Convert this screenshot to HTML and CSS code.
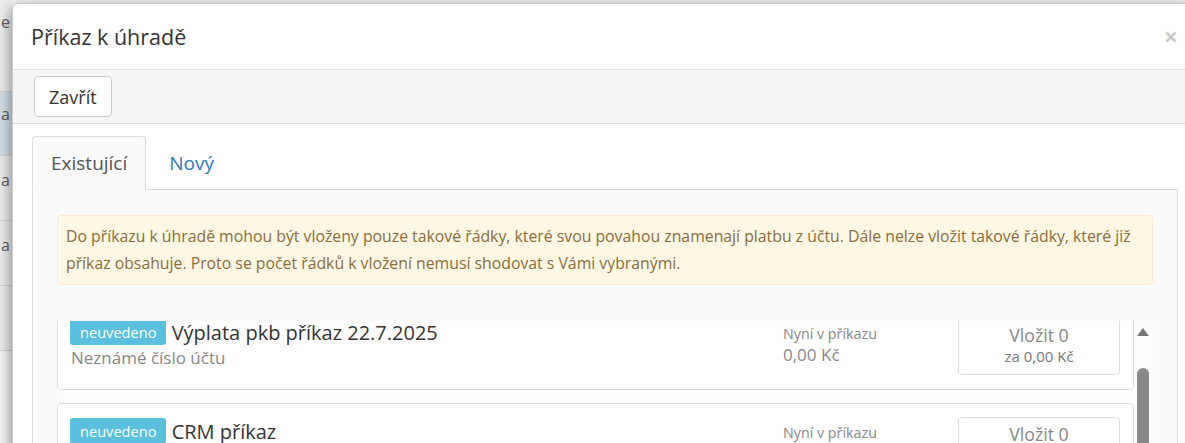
FILE: index.html
```html
<!DOCTYPE html>
<html lang="cs">
<head>
    <meta charset="UTF-8" />
    <meta name="viewport" content="width=device-width, initial-scale=1.0" />
    <title>Příkaz k úhradě</title>
    <link rel="stylesheet" href="styles.css">
</head>
<body>
    <!-- stranka pod dialogem, vidi se jen okraj -->
    <div class="page-strip">
        <div class="page-row first"><span>e</span></div>
        <div class="page-row selected"><span>a</span></div>
        <div class="page-row"><span>a</span></div>
        <div class="page-row"><span>a</span></div>
        <div class="page-row"></div>
    </div>

    <div class="modal">
        <div class="modal-header">
            <span class="close">&times;</span>
            <h4 class="modal-title">Příkaz k úhradě</h4>
        </div>

        <div class="modal-toolbar">
            <button class="btn">Zavřít</button>
        </div>

        <div class="modal-body">
            <ul class="tabs">
                <li class="tab active">Existující</li>
                <li class="tab">Nový</li>
            </ul>

            <div class="tab-panel">
                <div class="alert">
                    Do příkazu k úhradě mohou být vloženy pouze takové řádky, které svou povahou znamenají platbu z účtu. Dále nelze vložit takové řádky, které již příkaz obsahuje. Proto se počet řádků k vložení nemusí shodovat s Vámi vybranými.
                </div>

                <div class="order-list">
                    <div class="order-scroll">
                        <div class="order-items">
                            <div class="order">
                                <div class="order-main">
                                    <div class="order-title"><span class="badge">neuvedeno</span> Výplata pkb příkaz 22.7.2025</div>
                                    <div class="order-account">Neznámé číslo účtu</div>
                                </div>
                                <div class="order-sum">
                                    <div class="sum-label">Nyní v příkazu</div>
                                    <div class="sum-value">0,00 Kč</div>
                                </div>
                                <div class="insert-box">
                                    <div class="insert-count">Vložit 0</div>
                                    <div class="insert-price">za 0,00 Kč</div>
                                </div>
                            </div>

                            <div class="order">
                                <div class="order-main">
                                    <div class="order-title"><span class="badge">neuvedeno</span> CRM příkaz</div>
                                    <div class="order-account">Neznámé číslo účtu</div>
                                </div>
                                <div class="order-sum">
                                    <div class="sum-label">Nyní v příkazu</div>
                                    <div class="sum-value">0,00 Kč</div>
                                </div>
                                <div class="insert-box">
                                    <div class="insert-count">Vložit 0</div>
                                    <div class="insert-price">za 0,00 Kč</div>
                                </div>
                            </div>
                        </div>
                    </div>
                    <div class="scrollbar">
                        <div class="scroll-arrow"></div>
                        <div class="scroll-thumb"></div>
                    </div>
                </div>
            </div>
        </div>
    </div>
</body>
</html>
```

FILE: styles.css
```css
body {
    margin: 0;
    height: 443px;
    overflow: hidden;
    display: flex;
    align-items: flex-start;
    font-family: "Open Sans", "Noto Sans", sans-serif;
    color: #333;
    background-color: #f3f3f3;
}

/* okraj stranky pod dialogem */
.page-strip {
    width: 12px;
    flex-shrink: 0;
    overflow: hidden;
    background-color: #ececec;
    color: #5e5e5e;
    font-size: 16px;
    line-height: 20px;
}

.page-row {
    height: 65px;
    box-sizing: border-box;
    padding: 14px 2px 0 0;
    border-bottom: 1px solid #d4d4d4;
    text-align: right;
}

.page-row.first {
    height: 92px;
    padding-top: 12px;
}

.page-row.selected {
    height: 64px;
    padding-top: 12px;
    background-color: #d3dee6;
}

.modal {
    flex-shrink: 0;
    box-sizing: border-box;
    width: 1186px;
    height: 460px;
    margin-top: 3px;
    background-color: #fff;
    border: 1px solid rgba(0, 0, 0, 0.2);
    border-radius: 6px;
    box-shadow: 0 5px 15px rgba(0, 0, 0, 0.5);
    overflow: hidden;
}

.modal-header {
    height: 66px;
    box-sizing: border-box;
    padding: 18px 19px 0 18px;
    border-bottom: 1px solid #e5e5e5;
}

.modal-title {
    margin: 0;
    font-size: 21.5px;
    font-weight: normal;
    line-height: 30px;
    color: #333;
}

.close {
    float: right;
    margin-top: -1px;
    font-size: 25px;
    font-weight: bold;
    line-height: 30px;
    color: #000;
    opacity: 0.2;
}

.modal-toolbar {
    height: 54px;
    box-sizing: border-box;
    padding: 6px 21px;
    background-color: #f5f5f5;
    border-bottom: 1px solid #ddd;
}

.btn {
    height: 41px;
    padding: 0 14px;
    font-family: inherit;
    font-size: 18px;
    color: #333;
    background-color: #fff;
    border: 1px solid #ccc;
    border-radius: 4px;
}

.modal-body {
    padding: 12px 19px 0 19px;
}

.tabs {
    display: flex;
    margin: 0 0 -1px 0;
    padding: 0;
    list-style: none;
}

.tab {
    height: 54px;
    box-sizing: border-box;
    padding: 0 18px;
    line-height: 52px;
    font-size: 19px;
    color: #2a7ab8;
    border: 1px solid transparent;
    border-radius: 4px 4px 0 0;
    margin-right: 4px;
}

.tab.active {
    color: #555;
    background-color: #fafafa;
    border-color: #ddd;
    border-bottom-color: #fafafa;
}

.tab-panel {
    height: 300px;
    padding: 25px 24px 0 24px;
    background-color: #fafafa;
    border: 1px solid #ddd;
}

.alert {
    padding: 7px 8px;
    font-size: 15.8px;
    line-height: 27px;
    color: #8a6d3b;
    background-color: #fcf8e3;
    border: 1px solid #faebcc;
    border-radius: 4px;
}

.order-list {
    display: flex;
    height: 130px;
    margin-top: 36px;
    background-color: #fdfdfd;
}

.order-scroll {
    flex: 1;
    overflow: hidden;
}

/* seznam je odrolovany o kousek dolu */
.order-items {
    margin-top: -17px;
}

.order {
    display: flex;
    align-items: flex-start;
    padding: 13px 13px 14px 12px;
    margin-bottom: 13px;
    background-color: #fff;
    border: 1px solid #ddd;
    border-radius: 4px;
}

.order-main {
    flex: 1;
    padding-top: 1px;
}

.order-title {
    font-size: 20px;
    line-height: 28px;
    color: #333;
}

.badge {
    display: inline-block;
    vertical-align: 2px;
    padding: 0 10px;
    font-size: 14.6px;
    line-height: 26px;
    color: #fff;
    background-color: #5bc0de;
    border-radius: 3px;
}

.order-account {
    padding-left: 1px;
    font-size: 17px;
    line-height: 22px;
    color: #888;
}

.order-sum {
    width: 175px;
    padding-top: 6px;
    color: #888;
}

.sum-label {
    font-size: 14.3px;
    line-height: 20px;
}

.sum-value {
    font-size: 17px;
    line-height: 22px;
}

.insert-box {
    width: 160px;
    height: 52px;
    padding-top: 3px;
    text-align: center;
    color: #888;
    border: 1px solid #ddd;
    border-radius: 4px;
}

.insert-count {
    font-size: 17.7px;
    line-height: 26px;
}

.insert-price {
    font-size: 15px;
    line-height: 17px;
    color: #777;
}

.scrollbar {
    width: 19px;
    padding-left: 3px;
    box-sizing: border-box;
}

.scroll-arrow {
    width: 0;
    height: 0;
    margin-top: 7px;
    border-left: 6.5px solid transparent;
    border-right: 6.5px solid transparent;
    border-bottom: 8px solid #777;
}

.scroll-thumb {
    width: 12px;
    height: 120px;
    margin-top: 32px;
    background-color: #888;
    border-radius: 6px 6px 0 0;
}
```
